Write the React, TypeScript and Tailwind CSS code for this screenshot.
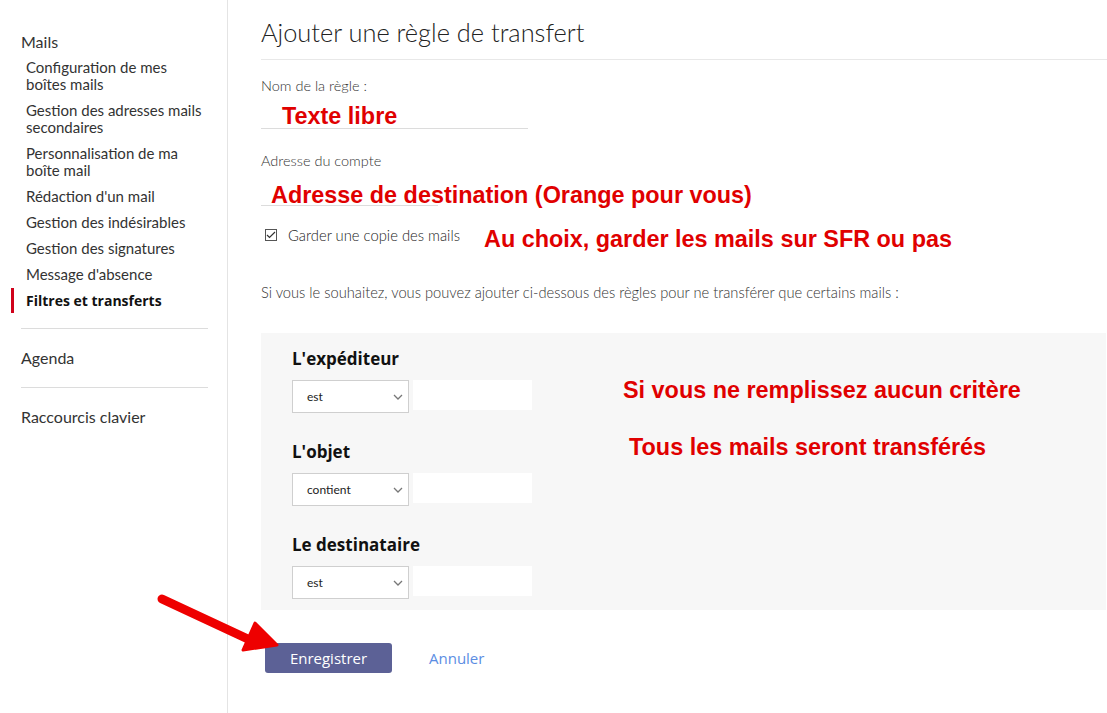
import React from 'react';

const sans = "font-['Lato','Open_Sans',sans-serif]";
const note = "font-['Liberation_Sans',Arial,sans-serif] font-bold text-[#e00000]";

function Chevron() {
  return (
    <svg width="10" height="6" viewBox="0 0 10 6" className="text-[#777]">
      <path d="M1 1l4 4 4-4" fill="none" stroke="currentColor" strokeWidth="1.3" />
    </svg>
  );
}

function Criterion({ label, value }: { label: string; value: string }) {
  return (
    <div className="flex flex-col">
      <div className="text-[17px] leading-[22px] font-bold text-[#111] font-['Open_Sans',sans-serif]">{label}</div>
      <div className="mt-[10px] flex">
        <div className="w-[117px] h-[33px] bg-white border border-[#cfcfcf] flex items-center justify-between pl-[14px] pr-[5px] text-[12px] text-[#222]">
          <span>{value}</span>
          <Chevron />
        </div>
        <div className="ml-[4px] w-[119px] h-[30px] bg-white" />
      </div>
    </div>
  );
}

export default function App() {
  const subItems = [
    ['Configuration de mes', 'boîtes mails'],
    ['Gestion des adresses mails', 'secondaires'],
    ['Personnalisation de ma', 'boîte mail'],
    ["Rédaction d'un mail"],
    ['Gestion des indésirables'],
    ['Gestion des signatures'],
    ["Message d'absence"],
  ];

  return (
    <div className={`relative flex w-[1107px] h-[713px] overflow-hidden bg-white text-[#222] ${sans}`}>
      {/* sidebar */}
      <aside className="w-[228px] shrink-0 border-r border-[#e4e4e4] pt-[32px]">
        <div className="pl-[21px] text-[16px] leading-[20px] text-[#333]">Mails</div>
        <ul className="mt-[7px] flex flex-col gap-[9px] pl-[26px] pr-[6px] text-[15px] leading-[17px] text-[#333]">
          {subItems.map((lines) => (
            <li key={lines[0]}>
              {lines.map((l) => (
                <div key={l}>{l}</div>
              ))}
            </li>
          ))}
          <li className="relative font-bold text-[14px] text-[#111] font-['Open_Sans',sans-serif]">
            <span className="absolute left-[-15px] top-[-4px] h-[25px] w-[3px] bg-[#d0021b]" />
            Filtres et transferts
          </li>
        </ul>
        <div className="mx-[21px] mt-[19px] border-t border-[#dcdcdc] w-[187px]" />
        <div className="pl-[21px] pt-[19px] pb-[19px] text-[16px] leading-[20px] text-[#333]">Agenda</div>
        <div className="mx-[21px] border-t border-[#dcdcdc] w-[187px]" />
        <div className="pl-[21px] pt-[19px] text-[16px] leading-[20px] text-[#333]">Raccourcis clavier</div>
      </aside>

      {/* main */}
      <main className="flex-1 pl-[33px]">
        <h1 className="pt-[18px] pb-[12px] border-b border-[#e8e8e8] text-[25.4px] leading-[29px] font-light text-[#222]">
          Ajouter une règle de transfert
        </h1>

        <div className="mt-[17px] text-[14.5px] leading-[18px] font-light text-[#333]">Nom de la règle :</div>
        <div className="relative mt-[16px] h-[18px] w-[267px] border-b border-[#dcdcdc]">
          <span className={`absolute left-[21px] top-[-8px] text-[23.4px] leading-[26px] whitespace-nowrap ${note}`}>Texte libre</span>
        </div>

        <div className="mt-[23px] text-[14.5px] leading-[18px] font-light text-[#333]">Adresse du compte</div>
        <div className="relative mt-[18px] h-[18px] w-[177px] border-b border-[#dcdcdc]">
          <span className={`absolute left-[10px] top-[-6px] text-[23.4px] leading-[26px] whitespace-nowrap ${note}`}>
            Adresse de destination (Orange pour vous)
          </span>
        </div>

        <div className="mt-[20px] flex items-center h-[18px]">
          <span className="ml-[4px] w-[12px] h-[12px] border border-[#555] flex items-center justify-center bg-white">
            <svg width="10" height="8" viewBox="0 0 10 8">
              <path d="M1 4l2.5 2.5L9 1" fill="none" stroke="#333" strokeWidth="1.2" />
            </svg>
          </span>
          <span className="ml-[11px] text-[14.8px] font-light text-[#222]">Garder une copie des mails</span>
          <span className={`ml-[24px] mt-[8px] text-[23.4px] leading-[26px] whitespace-nowrap ${note}`}>
            Au choix, garder les mails sur SFR ou pas
          </span>
        </div>

        <p className="mt-[39px] text-[14.7px] leading-[18px] font-light text-[#333]">
          Si vous le souhaitez, vous pouvez ajouter ci-dessous des règles pour ne transférer que certains mails :
        </p>

        <section className="relative mt-[32px] bg-[#f7f7f7] pl-[31px] pt-[15px] pb-[11px] flex flex-col gap-[28px] w-[845px]">
          <Criterion label="L'expéditeur" value="est" />
          <Criterion label="L'objet" value="contient" />
          <Criterion label="Le destinataire" value="est" />
          <div className={`absolute left-[362px] top-[44px] text-[23.4px] leading-[26px] whitespace-nowrap ${note}`}>
            Si vous ne remplissez aucun critère
          </div>
          <div className={`absolute left-[368px] top-[101px] text-[23.4px] leading-[26px] whitespace-nowrap ${note}`}>
            Tous les mails seront transférés
          </div>
        </section>

        <div className="mt-[33px] flex items-center font-['Open_Sans',sans-serif]">
          <button className="ml-[4px] w-[127px] h-[30px] rounded-[3px] bg-[#5c6196] text-white text-[15px]">
            Enregistrer
          </button>
          <span className="ml-[37px] text-[15px] text-[#5b8de3]">Annuler</span>
        </div>
      </main>

      {/* red arrow annotation */}
      <svg className="absolute left-0 top-0 pointer-events-none" width="1107" height="713">
        <line x1="162" y1="599" x2="250" y2="640" stroke="#ee0000" strokeWidth="9" strokeLinecap="round" />
        <polygon points="243,650 255,623 277,645" fill="#ee0000" stroke="#ee0000" strokeWidth="3" strokeLinejoin="round" />
      </svg>
    </div>
  );
}
